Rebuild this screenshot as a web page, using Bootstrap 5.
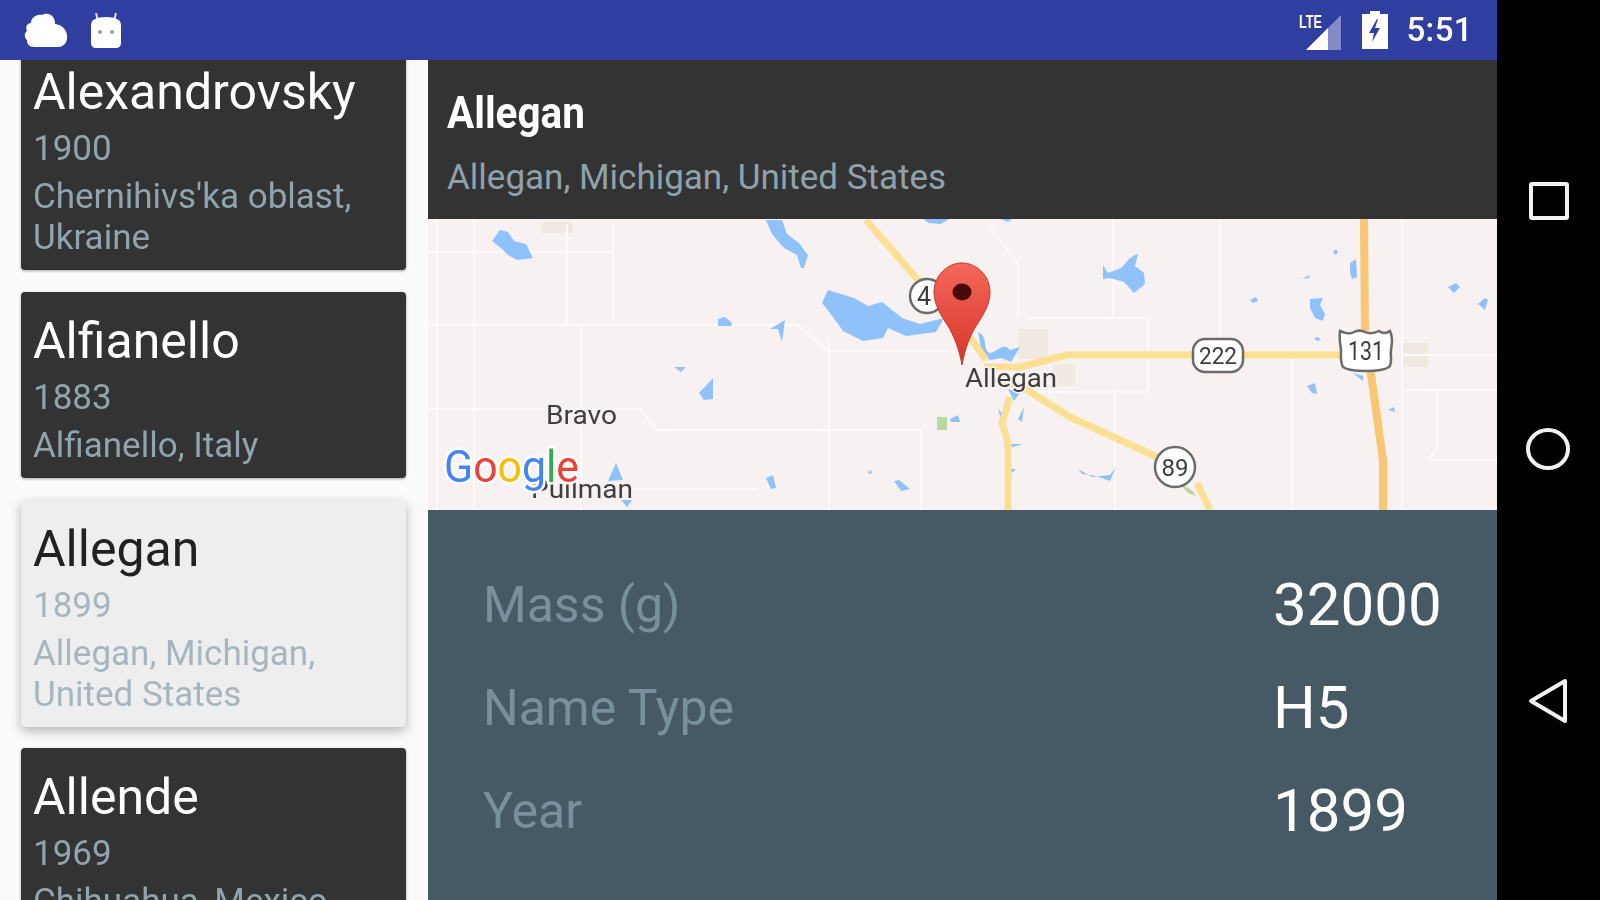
<!DOCTYPE html>
<html lang="en">
<head>
<meta charset="utf-8">
<title>Meteorites</title>
<link rel="stylesheet" href="https://cdn.jsdelivr.net/npm/bootstrap@5.3.0/dist/css/bootstrap.min.css">
<style>
html,body{height:100%;margin:0;background:#000;overflow:hidden}
body{font-family:Roboto,"Liberation Sans",sans-serif}
.screen-wrap{width:1600px;height:900px;filter:blur(.7px)}
.app-col{width:1497px}
.status-strip{height:60px;background:#303f9f;z-index:2;padding:0 24px 0 24px}
.clock{font-size:33px;font-weight:500;color:#fff;line-height:62px;margin-left:18px;letter-spacing:.4px}
.content-zone{height:840px;overflow:hidden}
.list-pane{width:428px;background:#fafafa;overflow:hidden}
.list-inner{margin-top:-17px;padding:0 22px 0 21px;display:flex;flex-direction:column;gap:22px}
.met-card{background:#333;border:0;border-radius:4px;padding:21px 12px 12px;box-shadow:0 1px 3px rgba(0,0,0,.35);flex:none}
.met-card.picked{background:#eee;box-shadow:0 4px 11px rgba(0,0,0,.28);margin-bottom:-1px}
.met-name{font-size:50px;line-height:56px;color:#fff;margin:0}
.picked .met-name{color:#212121}
.met-year{font-size:35px;line-height:41px;color:#90a4ae;margin:8px 0 0}
.met-place{font-size:35px;line-height:41px;color:#90a4ae;margin:7px 0 0}
.picked .met-year,.picked .met-place{color:#a6b6be}
.detail-pane{width:1069px}
.detail-head{height:159px;background:#333;padding:28px 19px 0}
.detail-title{font-size:44px;line-height:50px;font-weight:700;color:#fff;margin:0;transform:scaleX(.92);transform-origin:left}
.detail-sub{font-size:35px;line-height:42px;color:#8fa2ab;margin:19px 0 0}
.map-svg{display:block;width:1069px;height:291px;filter:blur(.4px)}
.detail-body{height:390px;background:#455a64;padding:55px 55px 0}
.stat-row{height:103px;line-height:80px}
.stat-label{width:790px;font-size:50px;color:#78909c}
.stat-value{font-size:60px;color:#fff}
.nav-col{width:103px;background:#000}
.nav-stack{height:900px;padding-top:181px}
.nav-icon{display:block;flex:none}
</style>
</head>
<body>
<div class="screen-wrap d-flex">
  <div class="app-col d-flex flex-column">
    <header class="status-strip d-flex align-items-center position-relative">
      <svg width="44" height="38" viewBox="0 0 44 38" class="nav-icon" aria-hidden="true"><path fill="#fff" d="M10 36C5 36 3 33 3 29 0 27 0 22 3 20 1 16 3 12 7 12c0-5 5-9 11-8 3-2 8-2 11 2 2 3 2 5 2 7 7 1 11 5 12 11 1 7-3 12-9 12z"/></svg>
      <svg width="32" height="36" viewBox="0 0 32 36" class="nav-icon" style="margin-left:22px" aria-hidden="true"><path stroke="#dfe3f5" stroke-width="2" d="M8 9 6 1M24 9l2-8"/><path fill="#fff" d="M1 13c0-5 5-8 15-8s15 3 15 8v18c0 3-2 5-5 5H6c-3 0-5-2-5-5z"/><circle cx="10" cy="20" r="2" fill="#8d97cf"/><circle cx="22" cy="20" r="2" fill="#8d97cf"/></svg>
      <div class="ms-auto d-flex align-items-center">
        <svg width="46" height="40" viewBox="0 0 46 40" class="nav-icon" aria-hidden="true"><path fill="#fff" fill-opacity=".4" d="M44 5v35H9z"/><path fill="#fff" d="M9 40l22-22v22z"/><text x="2" y="18" font-family="Liberation Sans" font-weight="700" font-size="18" fill="#fff" textLength="23" lengthAdjust="spacingAndGlyphs">LTE</text></svg>
        <svg width="26" height="38" viewBox="0 0 26 38" class="nav-icon" style="margin-left:19px" aria-hidden="true"><path fill="#fff" d="M8 0h10v3h8v35H0V3h8z"/><path fill="#303f9f" d="M15 8 7 22h5l-2 9 8-14h-5l3-9z"/></svg>
        <span class="clock">5:51</span>
      </div>
    </header>
    <main class="content-zone d-flex">
      <aside class="list-pane">
        <div class="list-inner">
          <div class="card met-card"><p class="met-name">Alexandrovsky</p><p class="met-year">1900</p><p class="met-place">Chernihivs'ka oblast,<br>Ukraine</p></div>
          <div class="card met-card"><p class="met-name">Alfianello</p><p class="met-year">1883</p><p class="met-place">Alfianello, Italy</p></div>
          <div class="card met-card picked"><p class="met-name">Allegan</p><p class="met-year">1899</p><p class="met-place">Allegan, Michigan,<br>United States</p></div>
          <div class="card met-card"><p class="met-name">Allende</p><p class="met-year">1969</p><p class="met-place">Chihuahua, Mexico</p></div>
        </div>
      </aside>
      <section class="detail-pane d-flex flex-column">
        <div class="detail-head">
          <h1 class="detail-title">Allegan</h1>
          <p class="detail-sub">Allegan, Michigan, United States</p>
        </div>
        <svg class="map-svg" viewBox="0 0 1069 291" role="img" aria-label="Map of Allegan, Michigan">
          <defs><linearGradient id="pinfill" x1="0" y1="0" x2="0" y2="1"><stop offset="0" stop-color="#f4675a"/><stop offset="1" stop-color="#d8352a"/></linearGradient></defs>
          <rect width="1069" height="291" fill="#f7f1f1"/>
          <g fill="#d9cfa9" opacity=".2"><rect x="114" y="3" width="31" height="11"/><rect x="975" y="124" width="25" height="24"/><rect x="590" y="110" width="30" height="30"/><rect x="625" y="145" width="22" height="22"/></g>
          <g stroke="#fcfafa" stroke-width="2" fill="none">
            <path d="M0 106H370l30 26h160M153 106V291M185 5V105M139 5V105M0 33H185M46 0V291M9 0V291M229 211H493M0 190H212l17 21M401 120V291M493 211V291M685 0V100M792 0V120M864 140V291M974 0V291M1009 172V230L1000 241M975 171H1069M1000 241H1069M975 136H1069M687 170V291M600 99H720V172M600 173H720M560 5l30 40V99M330 270H165"/>
          </g>
          <g fill="#8fc2fb">
            <path d="M64 22l8-11 8 2 6 9 12 3 7 14-16 2-9-5-6-6z"/>
            <path d="M338 1h16l5 14 13 10 4 6 4 5-4 13-3 0-4-13-13-7-12-14z"/>
            <path d="M394 84l6-13 26 8 14 8 14-4 20 16 18 6 24-6-8 14-30 4-18-8-5 10-20 3-20-10-16-22z"/>
            <path d="M290 100l7-2 7 6-1 3h-13zM342 110l15-9-3 22-4-13zM246 148h12l-5 5zM271 174l14-15v21l-9 1zM180 262l8-18 7 17z M193 281h11l-5 7zM338 259l7-3 3 13-5 1zM466 262l5-1 11 9-9 2zM440 253l3-2 1 3-3 1zM522 200l8-4 2 7h-9z"/>
            <path d="M550 113c10 5 5 15 10 20s15-12 22-2l10-3-9 15-9-4-12 2-8-6zM580 170l12 4-6 8zM570 190l10 10-8-3zM590 200l6-12-2 15zM575 225h20l-10 3zM650 250l14 8 18-2 6-8-6 14-14-5-14-2zM580 250h8l-4 4z"/>
            <path d="M675 46l5 8 13-5 3-3 5-6 6-4 3-1-3 12 9 7 1 11-11 9-10-11-14-4-7 1zM905 33l3-3 2 4-3 2zM922 44l6-4 1 18-5 2-2-6zM874 60l8-4-1 3zM822 81l6-3 2 4-5 2zM882 80l13-1-3 7 5 9-2 7-8-3-5-10zM886 119l4-1 3 3-4 1zM879 167l8-3 2 11-5-1zM925 154l10 3v5zM960 191l6-3 1 5zM1020 68l8-4 4 4-6 6zM1050 85l7-6 3 2-3 10z"/>
            <path d="M495 0h26l-8 5-12-1zM572 0h12l-4 3z"/>
          </g>
          <rect x="509" y="198" width="10" height="13" fill="#b9d9a1"/>
          <path d="M752 265l12 6 4 6-8-3z" fill="#b9d9a1"/>
          <g fill="none" stroke="#fbdf93" stroke-width="7" stroke-linejoin="round">
            <path d="M438 1l52 60 30 40 24 20 14 20"/>
            <path d="M556 148 592 148l47-12H912"/>
            <path d="M582 178l-8 26 6 20v67"/>
            <path d="M572 160l27 11 43 27 87 40M769 264l13 27"/>
          </g>
          <g fill="none" stroke="#f9c673" stroke-width="8"><path d="M936 0l1 112M942 148l13 93v50"/></g>
          <g fill="#fff" stroke="#6b6b6b" stroke-width="2.5">
            <rect x="765" y="120" width="50" height="33" rx="12"/>
            <path d="M912 112c7 3 10 3 14 1s7-2 11 0 8 2 14-1c4 3 8 2 11 0 3 7 2 12 1 19s2 12-2 17c-4 3-14 4-23 4s-19-1-23-4c-3-6-2-10-2-17-1-7-2-12-1-19z"/>
            <circle cx="747" cy="248" r="20"/>
            <circle cx="499" cy="77" r="17"/>
          </g>
          <g font-family="Roboto,'Liberation Sans',sans-serif" fill="#3c3c3c" text-anchor="middle">
            <text x="790" y="145" font-size="24" textLength="38" lengthAdjust="spacingAndGlyphs">222</text>
            <text x="938" y="141" font-size="25" textLength="36" lengthAdjust="spacingAndGlyphs">131</text>
            <text x="747" y="257" font-size="24">89</text>
            <text x="496" y="86" font-size="25">4</text>
          </g>
          <g font-family="Roboto,'Liberation Sans',sans-serif" font-size="26" fill="#3f3f3f" stroke="#f7f1f1" stroke-width="3" paint-order="stroke">
            <text x="537" y="168" textLength="92" lengthAdjust="spacingAndGlyphs">Allegan</text>
            <text x="118" y="205" textLength="71" lengthAdjust="spacingAndGlyphs">Bravo</text>
            <text x="103" y="279" textLength="102" lengthAdjust="spacingAndGlyphs">Pullman</text>
          </g>
          <text x="16" y="263" font-family="Roboto,'Liberation Sans',sans-serif" font-size="44" font-weight="400" stroke="#fff" stroke-width="5" paint-order="stroke" textLength="135" lengthAdjust="spacingAndGlyphs"><tspan fill="#4285f4">G</tspan><tspan fill="#ea4335">o</tspan><tspan fill="#fbbc05">o</tspan><tspan fill="#4285f4">g</tspan><tspan fill="#34a853">l</tspan><tspan fill="#ea4335">e</tspan></text>
          <path d="M534 44c15 0 28 13 28 29 0 13-7 23-14 34-6 10-11 22-14 39-3-17-8-29-14-39-7-11-14-21-14-34 0-16 13-29 28-29z" fill="url(#pinfill)" stroke="#c9362b" stroke-width="1"/>
          <ellipse cx="534" cy="73" rx="9.5" ry="8.5" fill="#4a0a08"/>
        </svg>
        <div class="detail-body">
          <div class="stat-row d-flex"><span class="stat-label">Mass (g)</span><span class="stat-value">32000</span></div>
          <div class="stat-row d-flex"><span class="stat-label">Name Type</span><span class="stat-value">H5</span></div>
          <div class="stat-row d-flex"><span class="stat-label">Year</span><span class="stat-value">1899</span></div>
        </div>
      </section>
    </main>
  </div>
  <nav class="nav-col d-flex flex-column align-items-center nav-stack" aria-label="System navigation">
    <svg width="42" height="40" viewBox="0 0 42 40" class="nav-icon" aria-hidden="true"><rect x="3" y="3" width="36" height="34" fill="none" stroke="#f2f2f2" stroke-width="4" rx="1"/></svg>
    <svg width="47" height="44" viewBox="0 0 47 44" class="nav-icon" style="margin-top:206px" aria-hidden="true"><ellipse cx="23" cy="22" rx="20" ry="19" fill="none" stroke="#f2f2f2" stroke-width="4"/></svg>
    <svg width="42" height="46" viewBox="0 0 42 46" class="nav-icon" style="margin-top:207px" aria-hidden="true"><path d="M37 3v40L3 23z" fill="none" stroke="#f2f2f2" stroke-width="4" stroke-linejoin="round"/></svg>
  </nav>
</div>
<script src="https://cdn.jsdelivr.net/npm/bootstrap@5.3.0/dist/js/bootstrap.bundle.min.js"></script>
</body>
</html>
